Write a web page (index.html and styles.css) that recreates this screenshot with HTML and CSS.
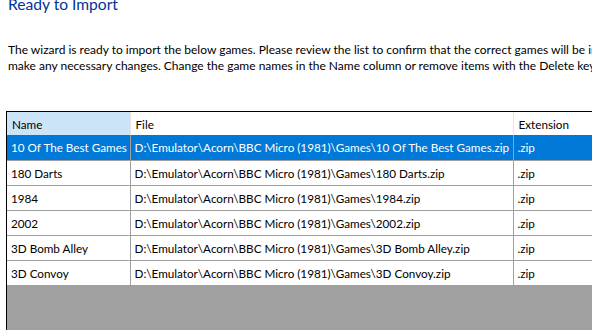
FILE: index.html
```html
<!DOCTYPE html>
<html>
	<head>
		<meta charset="utf-8" />
		<title>Ready to Import</title>
		<link rel="stylesheet" href="styles.css">
	</head>
	<body>
		<div id="page">
			<div class="title">Ready to Import</div>
			<p class="intro">The wizard is ready to import the below games. Please review the list to confirm that the correct games will be imported and<br>make any necessary changes. Change the game names in the Name column or remove items with the Delete key.</p>
			<div class="list">
				<table>
					<thead>
						<tr><th class="sorted">Name</th><th>File</th><th>Extension</th></tr>
					</thead>
					<tbody>
						<tr class="selected"><td>10 Of The Best Games</td><td>D:\Emulator\Acorn\BBC Micro (1981)\Games\10 Of The Best Games.zip</td><td>.zip</td></tr>
						<tr><td>180 Darts</td><td>D:\Emulator\Acorn\BBC Micro (1981)\Games\180 Darts.zip</td><td>.zip</td></tr>
						<tr><td>1984</td><td>D:\Emulator\Acorn\BBC Micro (1981)\Games\1984.zip</td><td>.zip</td></tr>
						<tr><td>2002</td><td>D:\Emulator\Acorn\BBC Micro (1981)\Games\2002.zip</td><td>.zip</td></tr>
						<tr><td>3D Bomb Alley</td><td>D:\Emulator\Acorn\BBC Micro (1981)\Games\3D Bomb Alley.zip</td><td>.zip</td></tr>
						<tr><td>3D Convoy</td><td>D:\Emulator\Acorn\BBC Micro (1981)\Games\3D Convoy.zip</td><td>.zip</td></tr>
					</tbody>
				</table>
			</div>
		</div>
	</body>
</html>
```

FILE: styles.css
```css
*{margin:0;padding:0;box-sizing:border-box}
html,body{height:100%;overflow:hidden;background:#fff}
body{font-family:Lato,"Liberation Sans",sans-serif;font-size:12px;color:#000;}
#page{width:700px;height:100%;display:flex;flex-direction:column;}
.title{color:#003399;font-size:15.6px;line-height:16px;padding-left:8px;margin-top:-4px;white-space:nowrap;}
.intro{padding:30px 0 0 8px;line-height:16px;white-space:nowrap;margin-bottom:37px;}
.list{flex:1;margin-left:6px;border-left:1px solid #000;border-top:1px solid #000;background:#a0a0a0;}
table{border-collapse:collapse;table-layout:fixed;width:700px;background:#fff;font-size:11.7px;}
th,td{white-space:nowrap;overflow:hidden;text-align:left;font-weight:normal;}
th{height:23px;padding:0 5px;border-right:1px solid #e5e5e5;}
th:nth-child(1){width:123px;}
th:nth-child(2){width:383px;}
th.sorted{background:#cce4f7;}
td{height:25px;padding:0 4px;border-right:1px solid #a0a0a0;border-bottom:1px solid #a0a0a0;}
tr.selected td{background:#0078d7;color:#fff;}
```
